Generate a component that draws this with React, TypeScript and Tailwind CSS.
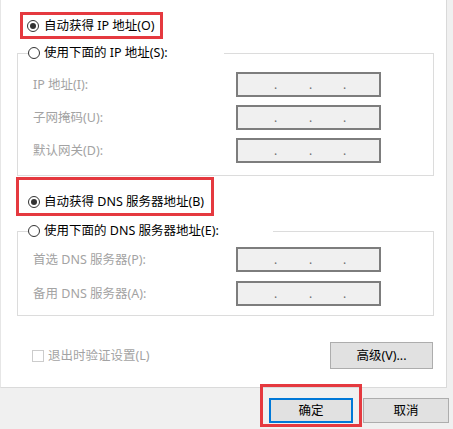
import React from "react";

function Radio({ checked }: { checked?: boolean }) {
  return (
    <span className="flex h-[12px] w-[12px] shrink-0 items-center justify-center rounded-full border border-[#333333] bg-white">
      {checked && <span className="h-[6px] w-[6px] rounded-full bg-[#333333]" />}
    </span>
  );
}

function IpBox() {
  return (
    <div className="flex h-[25px] w-[145px] items-center border-2 border-[#7d7d7d] bg-[#f0f0f0] pl-[36px] text-[12px] leading-none text-[#6f6f6f]">
      <span className="w-[35px]">.</span>
      <span className="w-[34px]">.</span>
      <span>.</span>
    </div>
  );
}

function FieldRow({ label }: { label: string }) {
  return (
    <div className="flex h-[25px] items-center">
      <span className="w-[218px] pl-[15px] text-[#a3a3a3]">{label}</span>
      <IpBox />
    </div>
  );
}

function GroupBox({ label, gap, width, children }: { label: string; gap: string; width: string; children: React.ReactNode }) {
  return (
    <fieldset className={"ml-[16px] w-[417px] border border-[#dcdcdc] " + gap}>
      <legend className={"ml-[10px] h-[16px] bg-white " + width}>
        <div className="flex h-[16px] items-center gap-[4px]">
          <Radio />
          <span>{label}</span>
        </div>
      </legend>
      {children}
    </fieldset>
  );
}

export default function App() {
  return (
    <div className="relative h-[429px] w-[453px] overflow-hidden bg-[#f0f0f0] font-['Noto_Sans','Noto_Sans_CJK_SC',sans-serif] text-[12.5px] leading-[16px] text-black">
      <div className="flex h-[388px] w-[447px] flex-col border-b border-l border-r border-b-[#dadada] border-l-[#e6e6e6] border-r-[#d9d9d9] bg-white">
        {/* 自动获得 IP */}
        <div className="ml-[19px] mt-[12px] flex h-[27px] w-[143px] items-center gap-[5px] border-[3px] border-[#e5393f] pl-[4px]">
          <Radio checked />
          <span>自动获得 IP 地址(O)</span>
        </div>

        <div className="mt-[6px]">
          <GroupBox label="使用下面的 IP 地址(S):" gap="pb-[12px]" width="w-[196px]">
            <div className="mt-[11px] flex flex-col gap-[8px]">
              <FieldRow label="IP 地址(I):" />
              <FieldRow label="子网掩码(U):" />
              <FieldRow label="默认网关(D):" />
            </div>
          </GroupBox>
        </div>

        {/* 自动获得 DNS */}
        <div className="ml-[15px] mt-[1px] flex h-[39px] w-[198px] items-start gap-[4px] border-[3px] border-[#e5393f] pl-[9px] pt-[14px]">
          <div className="flex h-[16px] items-center gap-[4px]">
            <Radio checked />
            <span>自动获得 DNS 服务器地址(B)</span>
          </div>
        </div>

        <div className="mt-[7px]">
          <GroupBox label="使用下面的 DNS 服务器地址(E):" gap="pb-[9px]" width="w-[245px]">
            <div className="mt-[8px] flex flex-col gap-[9px]">
              <FieldRow label="首选 DNS 服务器(P):" />
              <FieldRow label="备用 DNS 服务器(A):" />
            </div>
          </GroupBox>
        </div>

        <div className="mt-[26px] flex h-[27px] items-center justify-between pl-[31px] pr-[13px]">
          <div className="flex items-center gap-[4px] text-[#a3a3a3]">
            <span className="h-[12px] w-[12px] border border-[#cccccc] bg-white" />
            <span>退出时验证设置(L)</span>
          </div>
          <button className="flex h-[27px] w-[103px] items-center justify-center border border-[#adadad] bg-[#e1e1e1]">
            高级(V)...
          </button>
        </div>
      </div>

      <div className="mt-[10px] flex justify-end gap-[10px] pr-[4px]">
        <button className="flex h-[25px] w-[84px] items-center justify-center border-2 border-[#0078d7] bg-[#e1e1e1]">
          确定
        </button>
        <button className="flex h-[25px] w-[86px] items-center justify-center border border-[#adadad] bg-[#e1e1e1]">
          取消
        </button>
      </div>

      {/* highlight around OK */}
      <div className="pointer-events-none absolute left-[260px] top-[384px] h-[43px] w-[102px] border-[3px] border-[#e5393f]" />
    </div>
  );
}
